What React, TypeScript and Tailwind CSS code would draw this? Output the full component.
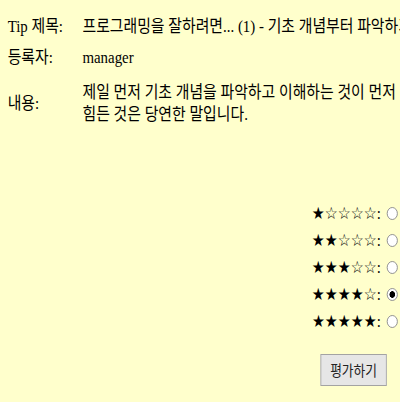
import { useState } from "react";

const ratings = [1, 2, 3, 4, 5];

export default function App() {
  const [score, setScore] = useState(4);

  return (
    <div className="w-[400px] h-[402px] overflow-hidden bg-[#ffffcc]">
      <div className="w-[471px] origin-top-left scale-x-[0.85] font-['Liberation_Serif','Noto_Sans_CJK_KR',serif] text-[17.5px] leading-[22px] text-black">
        {/* Tip 정보 */}
        <div className="grid grid-cols-[88px_1fr] items-center gap-y-[9px] pl-[9px] pt-[15px]">
          <div className="whitespace-nowrap">Tip 제목:</div>
          <div className="whitespace-nowrap overflow-hidden">
            프로그래밍을 잘하려면... (1) - 기초 개념부터 파악하기
          </div>

          <div>등록자:</div>
          <div>manager</div>

          <div className="mt-[4px]">내용:</div>
          <div className="mt-[4px]">
            <div className="whitespace-nowrap">제일 먼저 기초 개념을 파악하고 이해하는 것이 먼저</div>
            <div className="whitespace-nowrap">힘든 것은 당연한 말입니다.</div>
          </div>
        </div>

        {/* 평가 */}
        <div className="mt-[75px] flex flex-col items-end pr-[3px]">
          {ratings.map((n) => (
            <label key={n} className="flex h-[27px] items-center">
              <span className="font-['DejaVu_Sans',sans-serif] text-[17px] leading-none">
                {"★".repeat(n)}
                {"☆".repeat(5 - n)}
              </span>
              <span className="leading-none">:</span>
              <input
                type="radio"
                name="score"
                checked={score === n}
                onChange={() => setScore(n)}
                className="m-0 ml-[7px] h-[13px] w-[13px] appearance-none rounded-full border border-[#8a8a8a] bg-white checked:bg-[radial-gradient(circle,#000_0,#000_3px,#fff_3.6px)]"
              />
            </label>
          ))}
        </div>

        <div className="mt-[19px] flex justify-end pr-[16px]">
          <button className="h-[32px] w-[78px] border border-[#a3a3a3] bg-[#e6e6e6] font-['Noto_Sans_CJK_KR',sans-serif] text-[15px] text-[#222]">
            평가하기
          </button>
        </div>
      </div>
    </div>
  );
}
